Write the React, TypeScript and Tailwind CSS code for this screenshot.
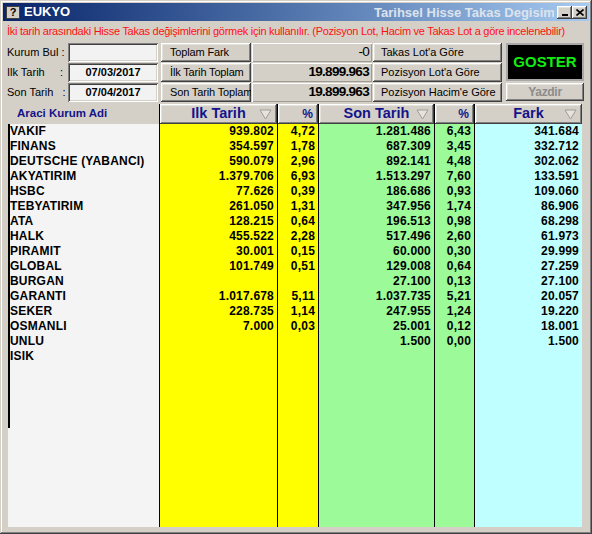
import React from 'react';

type Row = [string, string, string, string, string, string];

const rows: Row[] = [
  ['VAKIF', '939.802', '4,72', '1.281.486', '6,43', '341.684'],
  ['FINANS', '354.597', '1,78', '687.309', '3,45', '332.712'],
  ['DEUTSCHE (YABANCI)', '590.079', '2,96', '892.141', '4,48', '302.062'],
  ['AKYATIRIM', '1.379.706', '6,93', '1.513.297', '7,60', '133.591'],
  ['HSBC', '77.626', '0,39', '186.686', '0,93', '109.060'],
  ['TEBYATIRIM', '261.050', '1,31', '347.956', '1,74', '86.906'],
  ['ATA', '128.215', '0,64', '196.513', '0,98', '68.298'],
  ['HALK', '455.522', '2,28', '517.496', '2,60', '61.973'],
  ['PIRAMIT', '30.001', '0,15', '60.000', '0,30', '29.999'],
  ['GLOBAL', '101.749', '0,51', '129.008', '0,64', '27.259'],
  ['BURGAN', '', '', '27.100', '0,13', '27.100'],
  ['GARANTI', '1.017.678', '5,11', '1.037.735', '5,21', '20.057'],
  ['SEKER', '228.735', '1,14', '247.955', '1,24', '19.220'],
  ['OSMANLI', '7.000', '0,03', '25.001', '0,12', '18.001'],
  ['UNLU', '', '', '1.500', '0,00', '1.500'],
  ['ISIK', '', '', '', '', ''],
];

const raised =
  'bg-[#d4d0c8] shadow-[inset_-1px_-1px_#404040,inset_1px_1px_#ffffff,inset_-2px_-2px_#808080,inset_2px_2px_#e4e2dc]';
const sunken =
  'shadow-[inset_1px_1px_#808080,inset_-1px_-1px_#ffffff,inset_2px_2px_#404040,inset_-2px_-2px_#d4d0c8]';

const SortArrow = () => (
  <svg width="13" height="11" viewBox="0 0 13 11" className="shrink-0">
    <polygon points="1,1 12,1 6.5,10" fill="#e6e4de" stroke="#a09c94" strokeWidth="1" />
  </svg>
);

interface ColProps {
  width: string;
  bg: string;
  title: string;
  big?: boolean;
  index: number;
}

const DataColumn: React.FC<ColProps> = ({ width, bg, title, big, index }) => (
  <div className={`${width} flex flex-col border-l border-black`}>
    <div className={`h-[20px] ${raised} flex items-center px-[5px] ${big ? 'justify-between' : 'justify-end'}`}>
      {big ? (
        <>
          <span className="w-[13px]" />
          <span className="text-[14.5px] font-bold text-[#14148a]">{title}</span>
          <SortArrow />
        </>
      ) : (
        <span className="text-[12px] font-bold text-[#14148a]">{title}</span>
      )}
    </div>
    <div className={`flex-1 ${bg}`}>
      {rows.map((r, i) => (
        <div
          key={i}
          className="h-[15px] leading-[15px] text-right pr-[3px] text-[12px] font-bold tracking-[0.2px] text-black"
        >
          {r[index]}
        </div>
      ))}
    </div>
  </div>
);

export default function App() {
  return (
    <div
      className="w-[592px] h-[534px] bg-[#d4d0c8] p-[3px] shadow-[inset_-1px_-1px_#404040,inset_1px_1px_#d4d0c8,inset_-2px_-2px_#808080,inset_2px_2px_#ffffff] flex flex-col overflow-hidden"
      style={{ fontFamily: '"Liberation Sans", Arial, sans-serif' }}
    >
      {/* Title bar */}
      <div className="h-[18px] bg-gradient-to-r from-[#0a246a] to-[#a6caf0] flex items-center pl-[3px] pr-[2px]">
        <div className="w-[14px] h-[13px] bg-[#d4d0c8] border border-[#404040] flex items-center justify-center text-[11px] font-bold leading-none text-black">
          ?
        </div>
        <span className="ml-[4px] text-[13px] font-bold text-white">EUKYO</span>
        <div className="flex-1 overflow-hidden whitespace-nowrap text-right pr-[3px]">
          <span className="inline-block w-[180px] text-left text-[13px] font-bold text-[#dde3ec] overflow-hidden align-middle">
            Tarihsel Hisse Takas Degisim
          </span>
        </div>
        <div className={`w-[15px] h-[13px] ${raised} flex items-end justify-center pb-[3px]`}>
          <div className="w-[6px] h-[2px] bg-black" />
        </div>
        <div className={`w-[15px] h-[13px] ${raised} flex items-center justify-center`}>
          <svg width="8" height="7" viewBox="0 0 8 7">
            <path d="M0.5 0.5 L7.5 6.5 M7.5 0.5 L0.5 6.5" stroke="#000" strokeWidth="1.6" />
          </svg>
        </div>
      </div>

      {/* Description */}
      <div className="mt-[3px] pl-[4px] h-[14px] leading-[14px] text-[11px] tracking-[-0.27px] text-[#ff1010] whitespace-nowrap">
        İki tarih arasındaki Hisse Takas değişimlerini görmek için kullanılır. (Pozisyon Lot, Hacim ve Takas Lot a göre incelenebilir)
      </div>

      {/* Controls */}
      <div className="mt-[5px] pl-[4px] flex">
        <div className="flex flex-col gap-[1px]">
          {[
            ['Kurum Bul :', '', 'Toplam Fark', '-0', "Takas Lot'a Göre"],
            ['Ilk Tarih     :', '07/03/2017', 'İlk Tarih Toplam', '19.899.963', "Pozisyon Lot'a Göre"],
            ['Son Tarih   :', '07/04/2017', 'Son Tarih Toplam', '19.899.963', "Pozisyon Hacim'e Göre"],
          ].map((r, i) => (
            <div key={i} className="flex h-[19px] items-stretch">
              <div className="w-[61px] text-[11px] leading-[19px] text-black whitespace-pre">{r[0]}</div>
              <div
                className={`w-[90px] ${sunken} bg-[#f2f2f2] flex items-center justify-center text-[11px] font-bold text-black`}
              >
                {r[1]}
              </div>
              <div
                className={`ml-[3px] w-[90px] ${raised} overflow-hidden whitespace-nowrap pl-[9px] text-[11px] tracking-[-0.15px] leading-[19px] text-black`}
              >
                {r[2]}
              </div>
              <div
                className={`ml-[1px] w-[120px] bg-[#d4d0c8] shadow-[inset_1px_1px_#ffffff,inset_-1px_-1px_#a09c94] flex items-center justify-end pr-[3px] text-[13.5px] tracking-[-0.7px] text-black ${
                  i > 0 ? 'font-bold' : ''
                }`}
              >
                {r[3]}
              </div>
              <div
                className={`ml-[1px] w-[129px] ${raised} pl-[8px] text-[11px] leading-[19px] text-black whitespace-nowrap`}
              >
                {r[4]}
              </div>
            </div>
          ))}
        </div>
        <div className="ml-[4px] flex flex-col w-[78px]">
          <div className="h-[38px] bg-black border-2 border-[#a8a8a8] flex items-center justify-center text-[15px] font-bold text-[#10ee10]">
            GOSTER
          </div>
          <div className={`mt-[2px] h-[18px] ${raised} flex items-center justify-center text-[12px] font-bold tracking-[-0.3px] text-[#8c8c8c]`}>
            Yazdir
          </div>
        </div>
      </div>

      {/* Grid */}
      <div className="mt-[2px] ml-[5px] w-[574px] flex-1 flex mb-[4px]">
        <div className="w-[151px] flex flex-col">
          <div className="h-[20px] bg-[#d4d0c8] flex items-center pl-[9px] text-[11.5px] font-bold text-[#14148a]">
            Araci Kurum Adi
          </div>
          <div className="flex-1 bg-[#f4f4f4]">
            <div className="h-[304px] border-l-2 border-black">
              {rows.map((r, i) => (
                <div
                  key={i}
                  className="h-[15px] leading-[15px] text-[12px] font-bold tracking-[0.2px] text-black whitespace-nowrap"
                >
                  {r[0]}
                </div>
              ))}
            </div>
          </div>
        </div>
        <DataColumn width="w-[118px]" bg="bg-[#ffff00]" title="Ilk Tarih" big index={1} />
        <DataColumn width="w-[41px]" bg="bg-[#ffff00]" title="%" index={2} />
        <DataColumn width="w-[116px]" bg="bg-[#9cfa98]" title="Son Tarih" big index={3} />
        <DataColumn width="w-[40px]" bg="bg-[#9cfa98]" title="%" index={4} />
        <DataColumn width="w-[108px]" bg="bg-[#c0ffff]" title="Fark" big index={5} />
      </div>
    </div>
  );
}
